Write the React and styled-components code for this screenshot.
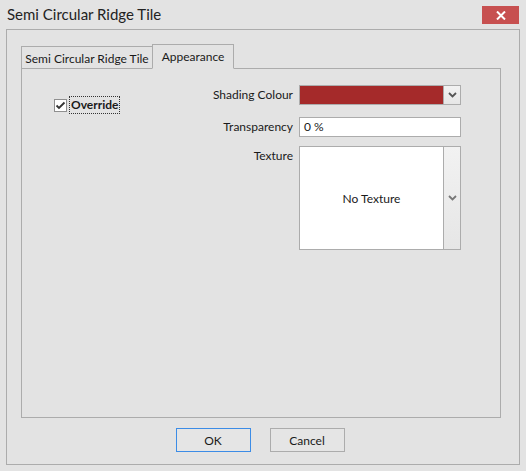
import React from 'react';
import styled, { createGlobalStyle } from 'styled-components';

const GlobalStyle = createGlobalStyle`
  html, body {
    margin: 0;
    padding: 0;
    background: #e3e3e3;
  }
  body {
    font-family: Lato, "Noto Sans", sans-serif;
    font-size: 12px;
    color: #1a1a1a;
  }
`;

const Window = styled.div`
  width: 526px;
  height: 471px;
  display: flex;
  flex-direction: column;
  background: #e3e3e3;
  box-sizing: border-box;
`;

const TitleBar = styled.div`
  height: 29px;
  display: flex;
  justify-content: space-between;
  align-items: flex-start;
  padding: 0 7px;
`;

const Title = styled.span`
  font-size: 15px;
  line-height: 29px;
  color: #222;
`;

const CloseButton = styled.button`
  margin-top: 6px;
  width: 37px;
  height: 18px;
  border: none;
  padding: 0;
  background: #c75050;
  display: flex;
  align-items: center;
  justify-content: center;
`;

const Frame = styled.div`
  flex: 1;
  margin: 0 6px 6px 6px;
  border: 1px solid #acacac;
  padding: 15px 18px 0 14px;
  display: flex;
  flex-direction: column;
`;

const TabStrip = styled.div`
  display: flex;
  align-items: flex-end;
  height: 24px;
  position: relative;
  z-index: 1;
  margin-bottom: -1px;
`;

const Tab = styled.div`
  box-sizing: border-box;
  width: ${p => p.$width}px;
  height: ${p => (p.$active ? 25 : 23)}px;
  border: 1px solid #acacac;
  border-bottom: ${p => (p.$active ? '1px solid #e3e3e3' : '1px solid #acacac')};
  border-left: ${p => (p.$first || p.$active ? '1px solid #acacac' : 'none')};
  margin-left: ${p => (p.$active ? '-1px' : '0')};
  background: #e3e3e3;
  display: flex;
  align-items: center;
  justify-content: center;
  white-space: nowrap;
  padding-top: ${p => (p.$active ? '0' : '1px')};
`;

const Panel = styled.div`
  height: 350px;
  box-sizing: border-box;
  border: 1px solid #acacac;
  padding: 16px 39px 0 32px;
  display: flex;
  justify-content: space-between;
  align-items: flex-start;
`;

const CheckRow = styled.label`
  display: flex;
  align-items: center;
  margin-top: 12px;
  gap: 3px;
`;

const CheckBox = styled.span`
  width: 13px;
  height: 13px;
  box-sizing: border-box;
  border: 1px solid #8f8f8f;
  background: #fff;
  display: flex;
  align-items: center;
  justify-content: center;
`;

const CheckText = styled.span`
  font-weight: bold;
  padding: 0 1px;
  line-height: 16px;
  outline: 1px dotted #333;
  outline-offset: 0;
`;

const Form = styled.div`
  display: grid;
  grid-template-columns: auto 162px;
  column-gap: 6px;
  align-items: start;
`;

const Label = styled.span`
  text-align: right;
  line-height: 20px;
  white-space: nowrap;
  margin-top: ${p => p.$top || 0}px;
`;

const ColourCombo = styled.div`
  height: 20px;
  box-sizing: border-box;
  border: 1px solid #acacac;
  display: flex;
`;

const Swatch = styled.div`
  flex: 1;
  background: ${p => p.$colour};
`;

const DropButton = styled.div`
  width: 16px;
  border-left: 1px solid #acacac;
  background: linear-gradient(#f2f2f2, #e6e6e6);
  display: flex;
  align-items: center;
  justify-content: center;
`;

const TextInput = styled.div`
  margin-top: ${p => p.$top || 0}px;
  height: 20px;
  box-sizing: border-box;
  border: 1px solid #acacac;
  background: #fff;
  padding: 0 4px;
  line-height: 18px;
`;

const TextureBox = styled.div`
  margin-top: 9px;
  height: 104px;
  box-sizing: border-box;
  border: 1px solid #acacac;
  background: #fff;
  display: flex;
`;

const TexturePreview = styled.div`
  flex: 1;
  display: flex;
  align-items: center;
  justify-content: center;
`;

const ButtonRow = styled.div`
  display: flex;
  justify-content: center;
  gap: 19px;
  margin-top: 10px;
  padding-right: 2px;
`;

const Button = styled.button`
  width: 75px;
  height: 24px;
  box-sizing: border-box;
  border: 1px solid ${p => (p.$default ? '#3c8ce6' : '#acacac')};
  background: #e5e5e5;
  font-family: inherit;
  font-size: 12px;
  color: #1a1a1a;
  padding: 0;
`;

const Chevron = ({ colour = '#555' }) => (
  <svg width="9" height="6" viewBox="0 0 9 6">
    <path d="M1 1 L4.5 4.5 L8 1" fill="none" stroke={colour} strokeWidth="1.8" />
  </svg>
);

const App = () => (
  <Window>
    <GlobalStyle />
    <TitleBar>
      <Title>Semi Circular Ridge Tile</Title>
      <CloseButton aria-label="Close">
        <svg width="10" height="9" viewBox="0 0 10 9">
          <path d="M1 0.5 L9 8.5 M9 0.5 L1 8.5" stroke="#fff" strokeWidth="2" />
        </svg>
      </CloseButton>
    </TitleBar>
    <Frame>
      <TabStrip>
        <Tab $width={132} $first>Semi Circular Ridge Tile</Tab>
        <Tab $width={82} $active>Appearance</Tab>
      </TabStrip>
      <Panel>
        <CheckRow>
          <CheckBox>
            <svg width="11" height="9" viewBox="0 0 11 9">
              <path d="M1.5 4.5 L4 7 L9.5 1.5" fill="none" stroke="#333" strokeWidth="1.8" />
            </svg>
          </CheckBox>
          <CheckText>Override</CheckText>
        </CheckRow>
        <Form>
          <Label>Shading Colour</Label>
          <ColourCombo>
            <Swatch $colour="#a52a2a" />
            <DropButton><Chevron /></DropButton>
          </ColourCombo>
          <Label $top={12}>Transparency</Label>
          <TextInput $top={12}>0 %</TextInput>
          <Label $top={9}>Texture</Label>
          <TextureBox>
            <TexturePreview>No Texture</TexturePreview>
            <DropButton><Chevron colour="#777" /></DropButton>
          </TextureBox>
        </Form>
      </Panel>
      <ButtonRow>
        <Button $default>OK</Button>
        <Button>Cancel</Button>
      </ButtonRow>
    </Frame>
  </Window>
);

export default App;
